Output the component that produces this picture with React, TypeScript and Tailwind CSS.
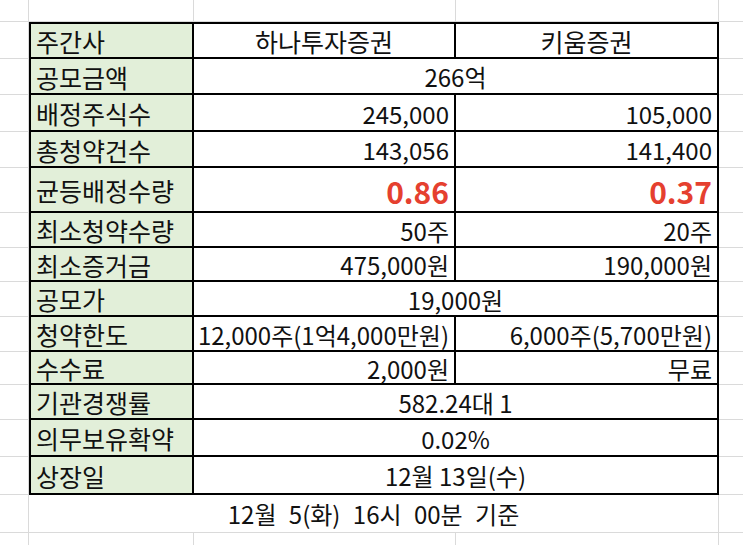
import React from "react";

type Row = {
  label: string;
  h: string;
  a?: React.ReactNode;
  b?: React.ReactNode;
  merged?: React.ReactNode;
  center?: boolean;
};

const rows: Row[] = [
  {
    label: "주간사",
    h: "h-[37px]",
    a: <span className="text-[25px]">하나투자증권</span>,
    b: <span className="text-[25px]">키움증권</span>,
    center: true,
  },
  { label: "공모금액", h: "h-[36px]", merged: "266억" },
  { label: "배정주식수", h: "h-[37px]", a: "245,000", b: "105,000" },
  { label: "총청약건수", h: "h-[36px]", a: "143,056", b: "141,400" },
  {
    label: "균등배정수량",
    h: "h-[45px]",
    a: <span className="text-[30px] font-bold text-[#e5402f]">0.86</span>,
    b: <span className="text-[30px] font-bold text-[#e5402f]">0.37</span>,
  },
  { label: "최소청약수량", h: "h-[35px]", a: "50주", b: "20주" },
  { label: "최소증거금", h: "h-[34px]", a: "475,000원", b: "190,000원" },
  { label: "공모가", h: "h-[35px]", merged: "19,000원" },
  { label: "청약한도", h: "h-[35px]", a: "12,000주(1억4,000만원)", b: "6,000주(5,700만원)" },
  { label: "수수료", h: "h-[33px]", a: "2,000원", b: "무료" },
  { label: "기관경쟁률", h: "h-[35px]", merged: "582.24대 1" },
  { label: "의무보유확약", h: "h-[37px]", merged: "0.02%" },
  { label: "상장일", h: "h-[38px]", merged: "12월 13일(수)" },
];

const light = "border-r border-b border-[#dadada]";

export default function App() {
  return (
    <div
      className="w-[743px] h-[545px] overflow-hidden bg-white text-[24px] leading-none text-[#111]"
      style={{ fontFamily: '"Noto Sans CJK KR", "Noto Sans", sans-serif' }}
    >
      <div className="grid grid-cols-[29px_165px_262px_263px_24px]">
        {/* top spreadsheet row */}
        <div className={`h-[22px] ${light}`} />
        <div className={`h-[22px] ${light}`} />
        <div className={`h-[22px] ${light}`} />
        <div className={`h-[22px] ${light}`} />
        <div className={`h-[22px] border-b border-[#dadada]`} />

        {rows.map((r, i) => {
          const top = i === 0 ? "border-t-2" : "";
          return (
            <React.Fragment key={i}>
              <div className={`${r.h} ${light}`} />
              <div
                className={`${r.h} ${top} border-l-2 border-r-2 border-b-2 border-black bg-[#e2efd9] flex items-center pl-[5px] pt-[2px] text-[25px]`}
              >
                {r.label}
              </div>
              {r.merged !== undefined ? (
                <div
                  className={`${r.h} ${top} col-span-2 border-r-2 border-b-2 border-black flex items-center justify-center pt-[2px]`}
                >
                  {r.merged}
                </div>
              ) : (
                <>
                  <div
                    className={`${r.h} ${top} border-r-2 border-b-2 border-black flex items-center ${
                      r.center ? "justify-center" : "justify-end pr-[5px]"
                    } pt-[2px]`}
                  >
                    {r.a}
                  </div>
                  <div
                    className={`${r.h} ${top} border-r-2 border-b-2 border-black flex items-center ${
                      r.center ? "justify-center" : "justify-end pr-[5px]"
                    } pt-[2px]`}
                  >
                    {r.b}
                  </div>
                </>
              )}
              <div className={`${r.h} border-b border-[#dadada]`} />
            </React.Fragment>
          );
        })}

        {/* footer merged row */}
        <div className={`h-[38px] ${light}`} />
        <div
          className={`h-[38px] col-span-3 ${light} flex items-center justify-center pt-[1px] [word-spacing:7px]`}
        >
          12월 5(화) 16시 00분 기준
        </div>
        <div className={`h-[38px] border-b border-[#dadada]`} />

        {/* bottom partial row */}
        <div className={`h-[20px] ${light}`} />
        <div className={`h-[20px] ${light}`} />
        <div className={`h-[20px] ${light}`} />
        <div className={`h-[20px] ${light}`} />
        <div className={`h-[20px] border-b border-[#dadada]`} />
      </div>
    </div>
  );
}
